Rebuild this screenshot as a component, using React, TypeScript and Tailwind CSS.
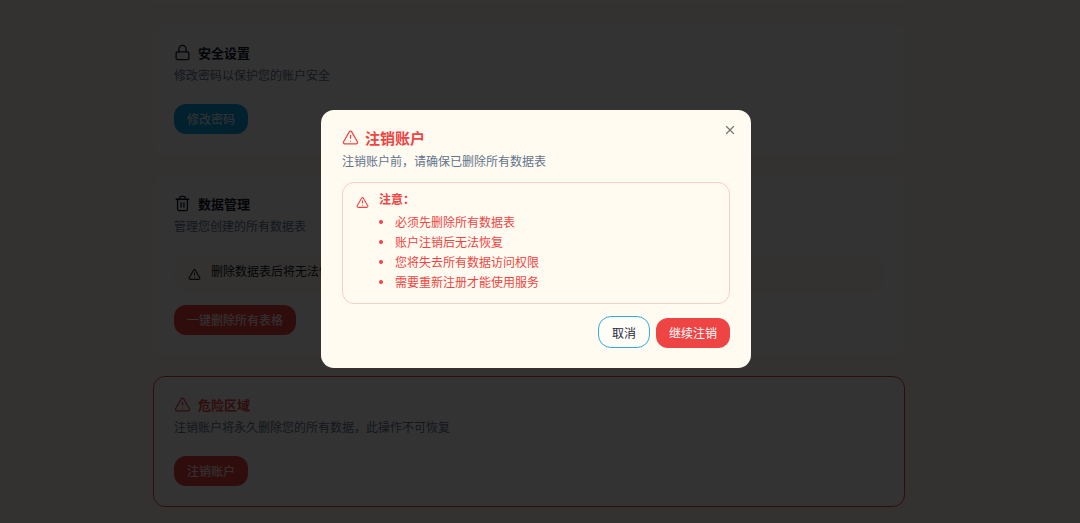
import type { ReactNode } from 'react';
import { Lock, Trash2, TriangleAlert, X } from 'lucide-react';

interface SectionProps {
  icon: ReactNode;
  title: string;
  description: string;
  danger?: boolean;
  children: ReactNode;
}

const notices = [
  '必须先删除所有数据表',
  '账户注销后无法恢复',
  '您将失去所有数据访问权限',
  '需要重新注册才能使用服务',
];

const buttonBase = 'h-[30px] rounded-[12px] px-[13px] pb-[2px] text-[12px] leading-[17px]';

function Section({ icon, title, description, danger, children }: SectionProps) {
  return (
    <section
      className={`rounded-[12px] border bg-white px-5 pt-[19px] pb-5 ${
        danger ? 'border-[#ef4444]' : 'border-[#fffdf5]'
      }`}
    >
      <h2
        className={`flex items-center gap-[7px] text-[13px] leading-[17px] font-bold ${
          danger ? 'text-[#ef4444]' : 'text-slate-900'
        }`}
      >
        {icon}
        {title}
      </h2>
      <p className="mt-[5px] mb-[21px] text-[12px] leading-[17px] text-slate-500">{description}</p>
      {children}
    </section>
  );
}

// Settings page behind the dialog
function SettingsPage() {
  return (
    <main className="mr-[22px] px-5">
      <div className="mx-auto flex max-w-[752px] flex-col gap-5">
        <div className="h-1 rounded-b-[12px] bg-white" />

        <Section
          icon={<Lock size={17} strokeWidth={1.8} />}
          title="安全设置"
          description="修改密码以保护您的账户安全"
        >
          <button className={`${buttonBase} block bg-[#0ea5e9] text-white`}>修改密码</button>
        </Section>

        <Section
          icon={<Trash2 size={17} strokeWidth={1.8} />}
          title="数据管理"
          description="管理您创建的所有数据表"
        >
          <div className="mb-[13px] flex gap-[10px] rounded-[12px] border border-[#fffbf0] bg-[#fffbf0] px-[13px] pt-[6px] pb-[10px] text-slate-900">
            <TriangleAlert size={13} className="mt-[6px] shrink-0" />
            <p className="text-[12px] leading-[17px]">删除数据表后将无法恢复，请谨慎操作</p>
          </div>
          <button className={`${buttonBase} block bg-[#ef4444] text-white`}>一键删除所有表格</button>
        </Section>

        <Section
          danger
          icon={<TriangleAlert size={17} strokeWidth={1.8} />}
          title="危险区域"
          description="注销账户将永久删除您的所有数据，此操作不可恢复"
        >
          <button className={`${buttonBase} block bg-[#ef4444] text-white`}>注销账户</button>
        </Section>
      </div>
    </main>
  );
}

function DeleteAccountDialog() {
  return (
    <div className="fixed inset-0 flex items-center justify-center bg-black/80 pr-2 pb-[45px]">
      <div
        role="dialog"
        aria-modal="true"
        aria-labelledby="dialog-title"
        className="relative w-full max-w-[430px] rounded-[13px] bg-[#fffbf0] px-[21px] pt-[19px] pb-5"
      >
        <button aria-label="关闭" className="absolute top-[13px] right-[14px] text-[#77756f]">
          <X size={14} />
        </button>

        <h2
          id="dialog-title"
          className="flex items-center gap-[6px] text-[15px] leading-[17px] font-bold text-[#ef4444]"
        >
          <TriangleAlert size={17} strokeWidth={1.8} />
          注销账户
        </h2>
        <p className="mt-[6px] text-[12px] leading-[17px] text-slate-500">
          注销账户前，请确保已删除所有数据表
        </p>

        <div className="mt-[13px] flex gap-[10px] rounded-[12px] border border-[#f9cdc6] px-[13px] pt-[7px] pb-[13px] text-[12px] leading-[17px] text-[#ef4444]">
          <TriangleAlert size={13} className="mt-[6px] shrink-0" />
          <div>
            <strong className="block font-bold">注意：</strong>
            <ul className="mt-[6px] flex flex-col gap-[3px]">
              {notices.map((notice) => (
                <li
                  key={notice}
                  className="flex items-center gap-3 before:size-1 before:rounded-full before:bg-current before:content-['']"
                >
                  {notice}
                </li>
              ))}
            </ul>
          </div>
        </div>

        <div className="mt-3 flex items-end justify-end gap-[6px]">
          <button className="h-8 rounded-[13px] border border-[#38a9dc] bg-[#fffdf8] px-[13px] text-[12px] leading-[17px] text-slate-800">
            取消
          </button>
          <button className={`${buttonBase} bg-[#ef4444] text-white`}>继续注销</button>
        </div>
      </div>
    </div>
  );
}

export default function App() {
  return (
    <div className="min-h-screen bg-[#fffbf0] font-['Noto_Sans_CJK_SC',sans-serif]">
      <SettingsPage />
      <DeleteAccountDialog />
    </div>
  );
}
